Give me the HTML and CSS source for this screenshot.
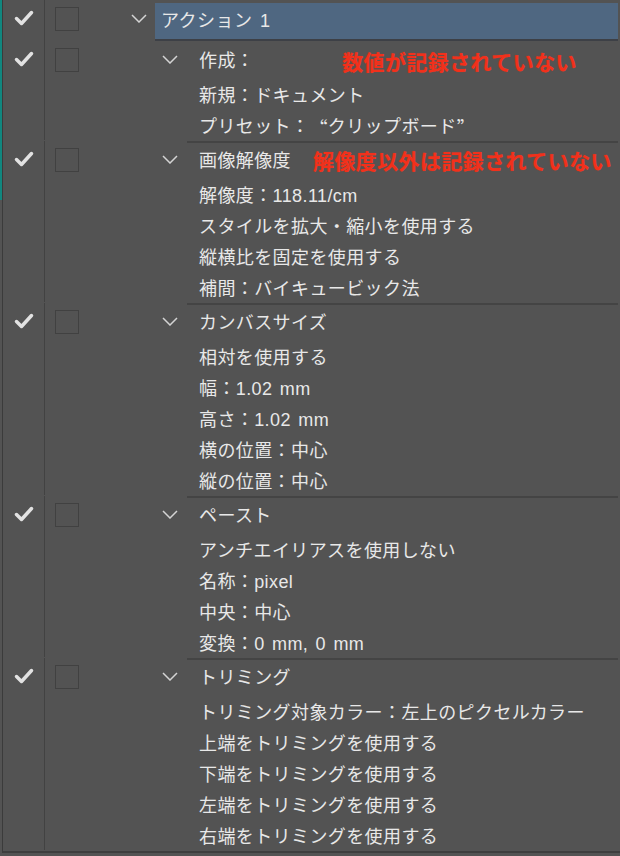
FILE: index.html
```html
<!DOCTYPE html>
<html lang="ja">
<head>
<meta charset="utf-8">
<link rel="stylesheet" href="styles.css">
</head>
<body>
<div class="screen">
  <div class="edge"><div class="teal"></div></div>
  <div class="panel">

    <div class="action">
      <div class="chk"><svg class="tick" viewBox="0 0 20 16"><path d="M2.5 8.5 L7.5 13.5 L17.5 2.5"/></svg></div>
      <div class="boxcol"><span class="box"></span></div>
      <div class="achev"><svg class="chev" viewBox="0 0 16 9"><path d="M1 1 L8 8 L15 1"/></svg></div>
      <div class="alabel">アクション 1</div>
    </div>

    <div class="cmd first">
      <div class="chk"><svg class="tick" viewBox="0 0 20 16"><path d="M2.5 8.5 L7.5 13.5 L17.5 2.5"/></svg></div>
      <div class="boxcol"><span class="box"></span></div>
      <div class="indent"></div>
      <div class="chevcol"><svg class="chev" viewBox="0 0 16 9"><path d="M1 1 L8 8 L15 1"/></svg></div>
      <div class="textcol">
        <div class="head"><span class="title">作成：</span><span class="note note1">数値が記録されていない</span></div>
        <div class="line">新規：ドキュメント</div>
        <div class="line">プリセット：<span class="q">“</span>クリップボード<span class="q">”</span></div>
      </div>
    </div>

    <div class="cmd">
      <div class="chk"><svg class="tick" viewBox="0 0 20 16"><path d="M2.5 8.5 L7.5 13.5 L17.5 2.5"/></svg></div>
      <div class="boxcol"><span class="box"></span></div>
      <div class="indent"></div>
      <div class="chevcol"><svg class="chev" viewBox="0 0 16 9"><path d="M1 1 L8 8 L15 1"/></svg></div>
      <div class="textcol">
        <div class="head"><span class="title">画像解像度</span><span class="note note2">解像度以外は記録されていない</span></div>
        <div class="line">解像度：118.11/cm</div>
        <div class="line">スタイルを拡大・縮小を使用する</div>
        <div class="line">縦横比を固定を使用する</div>
        <div class="line">補間：バイキュービック法</div>
      </div>
    </div>

    <div class="cmd">
      <div class="chk"><svg class="tick" viewBox="0 0 20 16"><path d="M2.5 8.5 L7.5 13.5 L17.5 2.5"/></svg></div>
      <div class="boxcol"><span class="box"></span></div>
      <div class="indent"></div>
      <div class="chevcol"><svg class="chev" viewBox="0 0 16 9"><path d="M1 1 L8 8 L15 1"/></svg></div>
      <div class="textcol">
        <div class="head"><span class="title">カンバスサイズ</span></div>
        <div class="line">相対を使用する</div>
        <div class="line">幅：1.02 mm</div>
        <div class="line">高さ：1.02 mm</div>
        <div class="line">横の位置：中心</div>
        <div class="line">縦の位置：中心</div>
      </div>
    </div>

    <div class="cmd">
      <div class="chk"><svg class="tick" viewBox="0 0 20 16"><path d="M2.5 8.5 L7.5 13.5 L17.5 2.5"/></svg></div>
      <div class="boxcol"><span class="box"></span></div>
      <div class="indent"></div>
      <div class="chevcol"><svg class="chev" viewBox="0 0 16 9"><path d="M1 1 L8 8 L15 1"/></svg></div>
      <div class="textcol">
        <div class="head"><span class="title">ペースト</span></div>
        <div class="line">アンチエイリアスを使用しない</div>
        <div class="line">名称：pixel</div>
        <div class="line">中央：中心</div>
        <div class="line">変換：0 mm, 0 mm</div>
      </div>
    </div>

    <div class="cmd">
      <div class="chk"><svg class="tick" viewBox="0 0 20 16"><path d="M2.5 8.5 L7.5 13.5 L17.5 2.5"/></svg></div>
      <div class="boxcol"><span class="box"></span></div>
      <div class="indent"></div>
      <div class="chevcol"><svg class="chev" viewBox="0 0 16 9"><path d="M1 1 L8 8 L15 1"/></svg></div>
      <div class="textcol">
        <div class="head"><span class="title">トリミング</span></div>
        <div class="line">トリミング対象カラー：左上のピクセルカラー</div>
        <div class="line">上端をトリミングを使用する</div>
        <div class="line">下端をトリミングを使用する</div>
        <div class="line">左端をトリミングを使用する</div>
        <div class="line">右端をトリミングを使用する</div>
      </div>
    </div>

  </div>
</div>
</body>
</html>
```

FILE: styles.css
```css
html, body {
  margin: 0;
  padding: 0;
  background: #535353;
}
body {
  width: 620px;
  height: 856px;
  overflow: hidden;
  font-family: "Liberation Sans", "Noto Sans CJK JP", sans-serif;
  color: #e8e8e8;
}
.screen {
  display: flex;
  height: 856px;
}
.edge {
  width: 2px;
  flex: none;
}
.teal {
  height: 200px;
  background: #11877f;
}
.panel {
  flex: 1;
  border-left: 1px solid #3b3b3b;
  padding-right: 2px;
  align-self: flex-start;
  border-bottom: 2px solid #3e3e3e;
}
.action, .cmd {
  display: flex;
  align-items: stretch;
}
.chk {
  width: 42px;
  flex: none;
  border-right: 1px solid #424242;
  display: flex;
  justify-content: center;
  align-items: flex-start;
}
.tick {
  display: block;
  width: 20px;
  height: 16px;
  fill: none;
  stroke: #e2e2e2;
  stroke-width: 3.5;
  stroke-linecap: round;
  stroke-linejoin: round;
}
.boxcol {
  width: 80px;
  flex: none;
  padding-left: 10px;
  box-sizing: border-box;
}
.box {
  display: block;
  width: 24px;
  height: 24px;
  box-sizing: border-box;
  border: 1.5px solid #414141;
}
.chev {
  display: block;
  width: 16px;
  height: 9px;
  fill: none;
  stroke: #d4d4d4;
  stroke-width: 1.5;
}

/* action row */
.action {
  height: 41px;
}
.action .chk { padding-top: 10px; box-sizing: border-box; }
.action .boxcol { padding-top: 7px; }
.achev {
  width: 30px;
  flex: none;
  padding-left: 6px;
  padding-top: 14px;
  box-sizing: border-box;
}
.alabel {
  flex: 1;
  margin-top: 3px;
  height: 36px;
  background: #4f6781;
  border-bottom: 2px solid #3d4046;
  box-sizing: content-box;
  padding-left: 6px;
  display: flex;
  align-items: center;
  font-size: 18px;
  letter-spacing: 0.5px;
  word-spacing: 2px;
  line-height: 1;
}

/* command blocks */
.cmd {
  padding-bottom: 1px;
}
.cmd .chk { padding-top: 10px; box-sizing: border-box; }
.cmd .boxcol { padding-top: 7px; }
.indent {
  width: 30px;
  flex: none;
}
.chevcol {
  width: 32px;
  flex: none;
  padding-left: 7px;
  padding-top: 14px;
  box-sizing: border-box;
}
.textcol {
  flex: 1;
  border-top: 2px solid #444444;
  padding-left: 12px;
}
.cmd.first .textcol {
  border-top: none;
}
.head {
  height: 35px;
  display: flex;
  align-items: center;
  box-sizing: border-box;
}
.cmd.first .head {
  height: 37px;
  padding-top: 3px;
}
.title, .line {
  font-size: 18px;
  letter-spacing: 0.4px;
  word-spacing: 2px;
  line-height: 1;
  white-space: nowrap;
}
.line {
  height: 31px;
  display: flex;
  align-items: center;
  padding-top: 4px;
  box-sizing: border-box;
}
.q {
  font-family: "Noto Sans CJK JP", sans-serif;
  font-feature-settings: "fwid" 1;
}
.note {
  font-family: "Noto Sans CJK JP", sans-serif;
  color: #f2301b;
  font-weight: bold;
  font-size: 21px;
  letter-spacing: 0.4px;
  line-height: 1;
  white-space: nowrap;
  text-shadow: 0 0 1px rgba(255, 60, 30, 0.6);
}
.note1 { margin-left: 88px; }
.note2 { margin-left: 22px; }
```
